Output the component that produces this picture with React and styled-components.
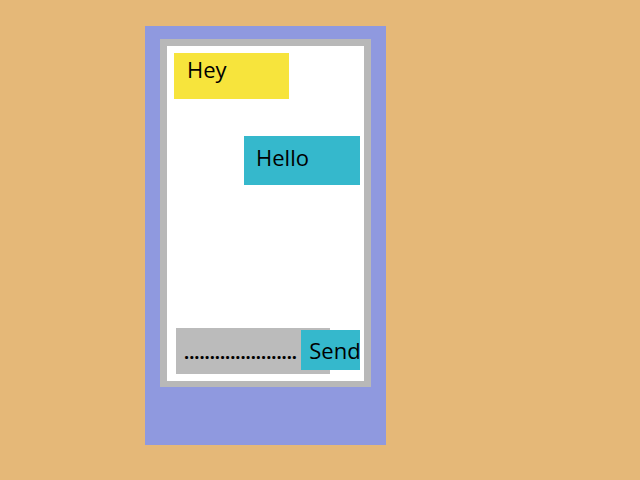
import styled, { createGlobalStyle } from 'styled-components';

const GlobalStyle = createGlobalStyle`
  html, body {
    margin: 0;
    height: 100%;
    background: #e5b878;
    font-family: 'Open Sans', 'Noto Sans', sans-serif;
  }
`;

const Phone = styled.div`
  box-sizing: border-box;
  width: 241px;
  height: 419px;
  margin: 26px 0 0 145px;
  padding: 13px 15px;
  background: #8f99df;
`;

const Screen = styled.div`
  box-sizing: border-box;
  display: flex;
  flex-direction: column;
  width: 211px;
  height: 348px;
  padding: 7px 4px 7px 7px;
  border: 7px solid #b8b8b8;
  border-bottom-width: 6px;
  background: #ffffff;
`;

const Messages = styled.div`
  flex: 1;
  display: flex;
  flex-direction: column;
  gap: 37px;
`;

const Bubble = styled.div`
  box-sizing: border-box;
  width: ${({ $mine }) => ($mine ? '116px' : '115px')};
  height: ${({ $mine }) => ($mine ? '49px' : '46px')};
  padding: ${({ $mine }) => ($mine ? '6px 12px' : '1px 13px')};
  align-self: ${({ $mine }) => ($mine ? 'flex-end' : 'flex-start')};
  background: ${({ $mine }) => ($mine ? '#35b8cc' : '#f7e43c')};
  color: #000;
  font-size: 22px;
  line-height: 30px;
`;

const Form = styled.form`
  display: flex;
  align-items: flex-start;
  margin-left: 2px;
`;

const Input = styled.div`
  box-sizing: border-box;
  width: 155px;
  height: 46px;
  padding: 11px 8px 0;
  background: #bbbbbb;
  font-size: 18px;
  font-weight: 700;
  line-height: 26px;
  color: #000;
  overflow: hidden;
  white-space: nowrap;
`;

const SendButton = styled.button`
  box-sizing: border-box;
  width: 59px;
  height: 40px;
  margin: 2px 0 0 -29px;
  padding: 0 0 0 8px;
  border: none;
  background: #35b8cc;
  color: #000;
  font-family: inherit;
  font-size: 22px;
  line-height: 30px;
  text-align: left;
  white-space: nowrap;
  overflow: hidden;
`;

export default function App() {
  return (
    <>
      <GlobalStyle />
      <Phone>
        <Screen>
          <Messages>
            <Bubble>Hey</Bubble>
            <Bubble $mine>Hello</Bubble>
          </Messages>
          <Form onSubmit={e => e.preventDefault()}>
            <Input>......................</Input>
            <SendButton type="submit">Send</SendButton>
          </Form>
        </Screen>
      </Phone>
    </>
  );
}
